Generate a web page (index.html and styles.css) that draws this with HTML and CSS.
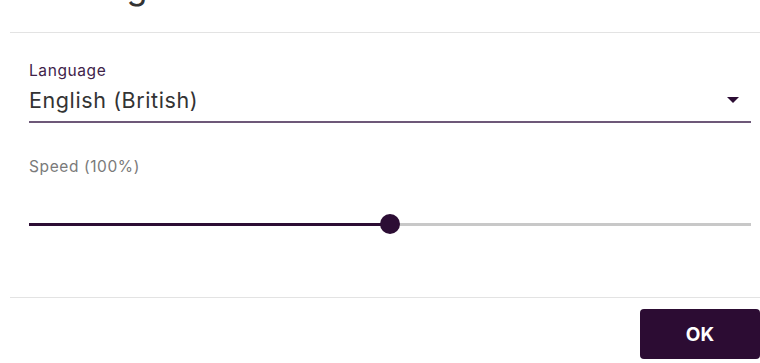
FILE: index.html
```html
<!DOCTYPE html>
<html lang="en">
<head>
<meta charset="utf-8">
<title>Settings</title>
<link rel="stylesheet" href="styles.css">
</head>
<body>
<div class="dialog">
  <header class="dialog-header">
    <h1 class="dialog-title">Settings</h1>
  </header>
  <div class="dialog-content">
    <div class="select-field">
      <label class="select-label">Language</label>
      <div class="select-value-row">
        <span class="select-value">English (British)</span>
        <svg class="select-arrow" width="12" height="6" viewBox="0 0 12 6" aria-hidden="true"><polygon points="0,0 12,0 6,6"/></svg>
      </div>
    </div>
    <div class="slider-field">
      <div class="slider-label">Speed (100%)</div>
      <div class="slider">
        <div class="slider-track"></div>
        <div class="slider-active" style="width: 50%"></div>
        <div class="slider-thumb" style="left: 50%"></div>
      </div>
    </div>
  </div>
  <footer class="dialog-actions">
    <button class="btn-primary">OK</button>
  </footer>
</div>
</body>
</html>
```

FILE: styles.css
```css
html, body {
  margin: 0;
  padding: 0;
  background: #ffffff;
  overflow: hidden;
}

body {
  font-family: Inter, "Liberation Sans", sans-serif;
  color: #333333;
}

.dialog {
  margin-left: 10px;
}

.dialog-header {
  height: 32px;
  display: flex;
  align-items: flex-end;
  padding-left: 19px;
  border-bottom: 1px solid #e3e3e3;
}

.dialog-title {
  margin: 0 0 28px 0;
  font-size: 34px;
  line-height: 34px;
  font-weight: 400;
  letter-spacing: 1px;
  color: #333333;
}

.dialog-content {
  padding: 28px 9px 63px 19px;
  border-bottom: 1px solid #e3e3e3;
}

.select-field {
  display: flex;
  flex-direction: column;
  padding-bottom: 7px;
  border-bottom: 2px solid #6d5878;
}

.select-label {
  font-size: 15.5px;
  line-height: 20px;
  letter-spacing: 0.6px;
  color: #3e2249;
}

.select-value-row {
  margin-top: 5px;
  display: flex;
  align-items: center;
  justify-content: space-between;
  height: 28px;
}

.select-value {
  font-size: 21.5px;
  line-height: 28px;
  letter-spacing: 0.6px;
  color: #333333;
}

.select-arrow {
  margin-right: 12px;
  fill: #2c0d34;
}

.slider-field {
  margin-top: 34px;
}

.slider-label {
  font-size: 15.5px;
  line-height: 20px;
  letter-spacing: 0.6px;
  color: #7a7a7a;
}

.slider {
  position: relative;
  margin-top: 37px;
  height: 20px;
}

.slider-track {
  position: absolute;
  left: 0;
  right: 0;
  top: 9px;
  height: 3px;
  background: #c8c8c8;
}

.slider-active {
  position: absolute;
  left: 0;
  top: 8.5px;
  height: 3.5px;
  background: #2c0d34;
}

.slider-thumb {
  position: absolute;
  top: 0;
  width: 20px;
  height: 20px;
  margin-left: -10px;
  border-radius: 50%;
  background: #2c0d34;
}

.dialog-actions {
  display: flex;
  justify-content: flex-end;
  padding: 11px 0 4px 0;
}

.btn-primary {
  width: 120px;
  height: 50px;
  border: none;
  border-radius: 4px;
  background: #2c0c33;
  color: #ffffff;
  font-family: Inter, "Liberation Sans", sans-serif;
  font-size: 19px;
  font-weight: 700;
  cursor: pointer;
}
```
